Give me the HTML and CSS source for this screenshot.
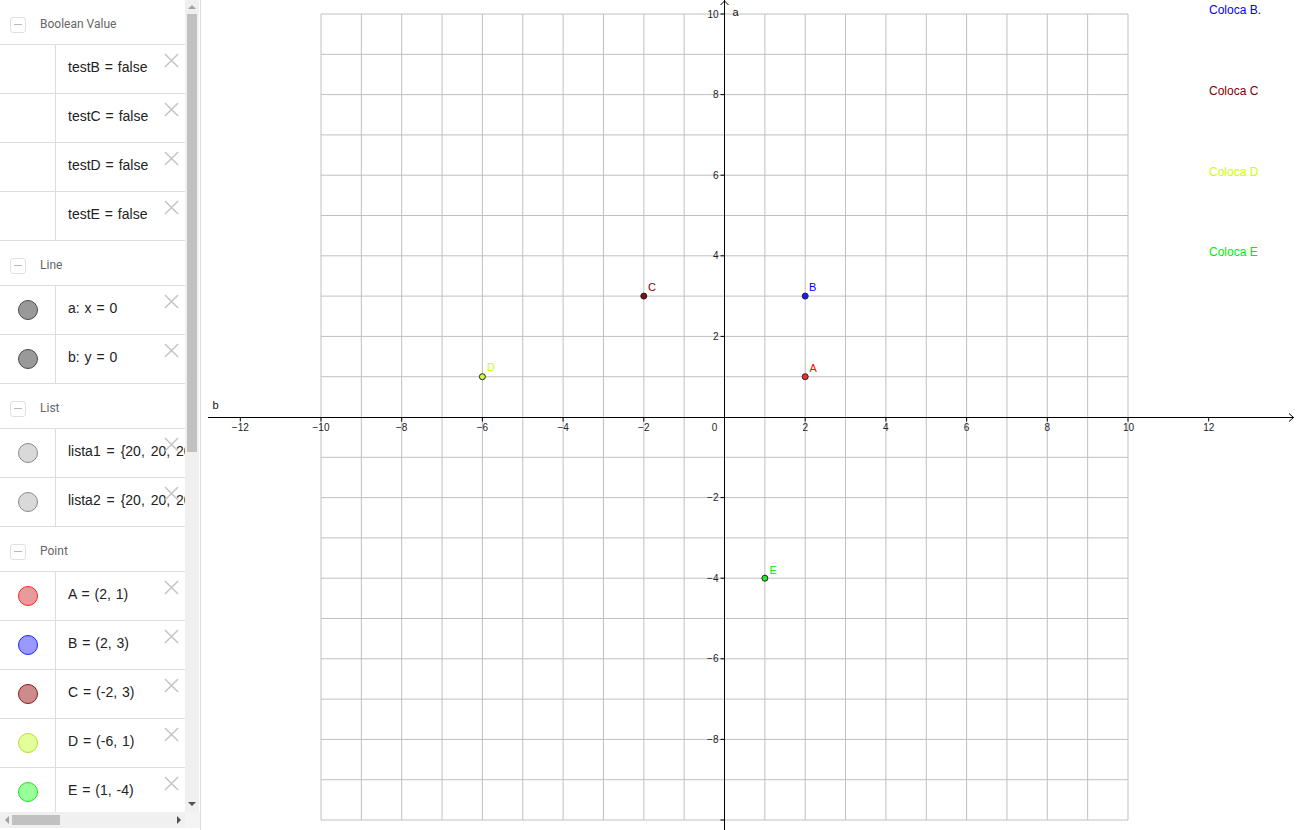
FILE: index.html
```html
<!DOCTYPE html>
<html>
<head>
<meta charset="utf-8">
<title>GeoGebra</title>
<link rel="stylesheet" href="styles.css">
</head>
<body>
<div class="app">
  <aside class="algebra">
    <div class="av-main">
      <div class="av-list">
        <div class="group-head"><span class="toggle"></span><span class="group-title">Boolean Value</span></div>
        <div class="item"><div class="cell"></div><div class="expr">testB = false</div><svg class="close" viewBox="0 0 16 16"><path d="M1 1L15 15M15 1L1 15"/></svg></div>
        <div class="item"><div class="cell"></div><div class="expr">testC = false</div><svg class="close" viewBox="0 0 16 16"><path d="M1 1L15 15M15 1L1 15"/></svg></div>
        <div class="item"><div class="cell"></div><div class="expr">testD = false</div><svg class="close" viewBox="0 0 16 16"><path d="M1 1L15 15M15 1L1 15"/></svg></div>
        <div class="item"><div class="cell"></div><div class="expr">testE = false</div><svg class="close" viewBox="0 0 16 16"><path d="M1 1L15 15M15 1L1 15"/></svg></div>

        <div class="group-head"><span class="toggle"></span><span class="group-title">Line</span></div>
        <div class="item"><div class="cell"><span class="dot dot-line"></span></div><div class="expr">a: x = 0</div><svg class="close" viewBox="0 0 16 16"><path d="M1 1L15 15M15 1L1 15"/></svg></div>
        <div class="item"><div class="cell"><span class="dot dot-line"></span></div><div class="expr">b: y = 0</div><svg class="close" viewBox="0 0 16 16"><path d="M1 1L15 15M15 1L1 15"/></svg></div>

        <div class="group-head"><span class="toggle"></span><span class="group-title">List</span></div>
        <div class="item"><div class="cell"><span class="dot dot-list"></span></div><div class="expr expr-list">lista1 = {20, 20, 20, 20, 20}</div><svg class="close" viewBox="0 0 16 16"><path d="M1 1L15 15M15 1L1 15"/></svg></div>
        <div class="item"><div class="cell"><span class="dot dot-list"></span></div><div class="expr expr-list">lista2 = {20, 20, 20, 20, 20}</div><svg class="close" viewBox="0 0 16 16"><path d="M1 1L15 15M15 1L1 15"/></svg></div>

        <div class="group-head"><span class="toggle"></span><span class="group-title">Point</span></div>
        <div class="item"><div class="cell"><span class="dot dot-a"></span></div><div class="expr">A = (2, 1)</div><svg class="close" viewBox="0 0 16 16"><path d="M1 1L15 15M15 1L1 15"/></svg></div>
        <div class="item"><div class="cell"><span class="dot dot-b"></span></div><div class="expr">B = (2, 3)</div><svg class="close" viewBox="0 0 16 16"><path d="M1 1L15 15M15 1L1 15"/></svg></div>
        <div class="item"><div class="cell"><span class="dot dot-c"></span></div><div class="expr">C = (-2, 3)</div><svg class="close" viewBox="0 0 16 16"><path d="M1 1L15 15M15 1L1 15"/></svg></div>
        <div class="item"><div class="cell"><span class="dot dot-d"></span></div><div class="expr">D = (-6, 1)</div><svg class="close" viewBox="0 0 16 16"><path d="M1 1L15 15M15 1L1 15"/></svg></div>
        <div class="item"><div class="cell"><span class="dot dot-e"></span></div><div class="expr">E = (1, -4)</div><svg class="close" viewBox="0 0 16 16"><path d="M1 1L15 15M15 1L1 15"/></svg></div>
      </div>
      <div class="vscroll">
        <span class="arrow arrow-up"></span>
        <div class="vtrack"><div class="vthumb"></div></div>
        <span class="arrow arrow-down"></span>
      </div>
    </div>
    <div class="av-bottom">
      <div class="hscroll">
        <span class="arrow arrow-left"></span>
        <div class="htrack"><div class="hthumb"></div></div>
        <span class="arrow arrow-right"></span>
      </div>
      <div class="corner"></div>
    </div>
  </aside>

  <main class="graphics">
    <svg class="canvas" width="1095" height="830" viewBox="201 0 1095 830">
      <path class="grid" d="M321 14V820M361.35 14V820M401.7 14V820M442.05 14V820M482.4 14V820M522.75 14V820M563.1 14V820M603.45 14V820M643.8 14V820M684.15 14V820M764.85 14V820M805.2 14V820M845.55 14V820M885.9 14V820M926.25 14V820M966.6 14V820M1006.95 14V820M1047.3 14V820M1087.65 14V820M1128 14V820
      M321 14H1128M321 54.3H1128M321 94.6H1128M321 134.9H1128M321 175.2H1128M321 215.5H1128M321 255.8H1128M321 296.1H1128M321 336.4H1128M321 376.7H1128M321 457.3H1128M321 497.6H1128M321 537.9H1128M321 578.2H1128M321 618.5H1128M321 658.8H1128M321 699.1H1128M321 739.4H1128M321 779.7H1128M321 820H1128"/>
      <path class="axis" d="M208 417.5H1294M724.5 0V830"/>
      <path class="axis" d="M1289 413.5L1293.5 417.5L1289 421.5M720.5 5L724.5 1L728.5 5"/>
      <path class="axis" d="M240.3 417.5V421.5M321 417.5V421.5M401.7 417.5V421.5M482.4 417.5V421.5M563.1 417.5V421.5M643.8 417.5V421.5M805.2 417.5V421.5M885.9 417.5V421.5M966.6 417.5V421.5M1047.3 417.5V421.5M1128 417.5V421.5M1208.7 417.5V421.5
      M720.5 14H724.5M720.5 94.6H724.5M720.5 175.2H724.5M720.5 255.8H724.5M720.5 336.4H724.5M720.5 497.6H724.5M720.5 578.2H724.5M720.5 658.8H724.5M720.5 739.4H724.5M720.5 820H724.5"/>

      <g class="ticklabel xlab">
        <text x="240.3" y="431">−12</text>
        <text x="321" y="431">−10</text>
        <text x="401.7" y="431">−8</text>
        <text x="482.4" y="431">−6</text>
        <text x="563.1" y="431">−4</text>
        <text x="643.8" y="431">−2</text>
        <text x="714.5" y="431">0</text>
        <text x="805.2" y="431">2</text>
        <text x="885.9" y="431">4</text>
        <text x="966.6" y="431">6</text>
        <text x="1047.3" y="431">8</text>
        <text x="1128.5" y="431">10</text>
        <text x="1208.7" y="431">12</text>
      </g>
      <g class="ticklabel ylab">
        <text x="718.5" y="17.8">10</text>
        <text x="718.5" y="98.2">8</text>
        <text x="718.5" y="178.8">6</text>
        <text x="718.5" y="259.4">4</text>
        <text x="718.5" y="340">2</text>
        <text x="718.5" y="501.2">−2</text>
        <text x="718.5" y="581.8">−4</text>
        <text x="718.5" y="662.4">−6</text>
        <text x="718.5" y="743">−8</text>
      </g>

      <text class="axisname" x="212.5" y="409">b</text>
      <text class="axisname" x="732.5" y="15.5">a</text>

      <circle class="pt pt-a" cx="805.2" cy="376.7" r="3"/>
      <circle class="pt pt-b" cx="805.2" cy="296.1" r="3"/>
      <circle class="pt pt-c" cx="643.8" cy="296.1" r="3"/>
      <circle class="pt pt-d" cx="482.4" cy="376.7" r="3"/>
      <circle class="pt pt-e" cx="764.85" cy="578.2" r="3"/>

      <text class="ptlabel lab-a" x="809.5" y="371.5">A</text>
      <text class="ptlabel lab-b" x="809" y="291">B</text>
      <text class="ptlabel lab-c" x="648" y="291">C</text>
      <text class="ptlabel lab-d" x="487" y="371">D</text>
      <text class="ptlabel lab-e" x="769.5" y="573.5">E</text>

      <text class="note lab-b" x="1209" y="14">Coloca B.</text>
      <text class="note lab-c" x="1209" y="95">Coloca C</text>
      <text class="note lab-d" x="1209" y="176">Coloca D</text>
      <text class="note lab-e" x="1209" y="256">Coloca E</text>
    </svg>
  </main>
</div>
</body>
</html>
```
FILE: styles.css
```css
html, body {
  margin: 0;
  padding: 0;
  background: #ffffff;
}
body {
  width: 1296px;
  height: 830px;
  overflow: hidden;
  font-family: "Liberation Sans", Arial, sans-serif;
}
.app {
  display: flex;
  width: 1296px;
  height: 830px;
}

/* ---------- Algebra view ---------- */
.algebra {
  width: 200px;
  height: 830px;
  border-right: 1px solid #dcdcdc;
  display: flex;
  flex-direction: column;
  background: #fff;
}
.av-main {
  display: flex;
  height: 812px;
}
.av-list {
  width: 185px;
  height: 812px;
  overflow: hidden;
}
.group-head {
  box-sizing: border-box;
  height: 45px;
  padding-top: 4px;
  border-bottom: 1px solid #dedede;
  display: flex;
  align-items: center;
  gap: 14px;
  padding-left: 10px;
}
.toggle {
  width: 14px;
  height: 14px;
  border: 1px solid #e0e0e0;
  border-radius: 3px;
  display: flex;
  align-items: center;
  justify-content: center;
  margin-top: 1px;
}
.toggle::before {
  content: "";
  width: 8px;
  height: 1px;
  background: #b8b8b8;
}
.group-title {
  font-family: Roboto, "Open Sans", sans-serif;
  font-size: 12px;
  color: #666;
}
.item {
  position: relative;
  height: 48px;
  border-bottom: 1px solid #dedede;
  display: flex;
  align-items: center;
}
.cell {
  width: 56px;
  height: 48px;
  border-right: 1px solid #dedede;
  box-sizing: border-box;
  flex: none;
  display: flex;
  align-items: center;
  justify-content: center;
  padding-bottom: 1px;
}
.expr {
  padding-left: 12px;
  padding-bottom: 4px;
  font-size: 14px;
  color: #222;
  white-space: nowrap;
  word-spacing: 1px;
}
.expr-list {
  word-spacing: 2px;
}
.close {
  position: absolute;
  right: 6px;
  top: 8px;
  width: 15px;
  height: 15px;
  fill: none;
  stroke: #c4c4c4;
  stroke-width: 1.6;
}
.dot {
  width: 18px;
  height: 18px;
  border-radius: 50%;
  border: 1px solid #444;
  box-sizing: content-box;
}
.dot-line { background: #999999; border-color: #4a4a4a; }
.dot-list { background: #d9d9d9; border-color: #8a8a8a; }
.dot-a { background: #e99a9a; border-color: #ff2020; }
.dot-b { background: #9999ff; border-color: #2020ff; }
.dot-c { background: #cc8c8c; border-color: #8a1a1a; }
.dot-d { background: #e2ff99; border-color: #b8dd33; }
.dot-e { background: #99ff99; border-color: #22dd22; }

/* scrollbars */
.vscroll {
  width: 14px;
  height: 812px;
  background: #f0f0f0;
  display: flex;
  flex-direction: column;
  align-items: center;
}
.vtrack {
  flex: 1;
  width: 10px;
}
.vthumb {
  width: 10px;
  height: 438px;
  margin-top: 1px;
  background: #c1c1c1;
}
.arrow {
  width: 0;
  height: 0;
  flex: none;
}
.arrow-up {
  margin: 5px 0 4px;
  border-left: 4px solid transparent;
  border-right: 4px solid transparent;
  border-bottom: 4px solid #a3a3a3;
}
.arrow-down {
  margin: 4px 0 6px;
  border-left: 4px solid transparent;
  border-right: 4px solid transparent;
  border-top: 4px solid #505050;
}
.av-bottom {
  display: flex;
  height: 16px;
}
.hscroll {
  width: 185px;
  height: 16px;
  background: #f0f0f0;
  display: flex;
  align-items: center;
}
.htrack {
  flex: 1;
  height: 10px;
}
.hthumb {
  width: 48px;
  height: 10px;
  background: #c1c1c1;
}
.arrow-left {
  margin: 0 3px 0 5px;
  border-top: 4px solid transparent;
  border-bottom: 4px solid transparent;
  border-right: 4px solid #a3a3a3;
}
.arrow-right {
  margin: 0 4px 0 3px;
  border-top: 4px solid transparent;
  border-bottom: 4px solid transparent;
  border-left: 4px solid #505050;
}
.corner {
  width: 15px;
  height: 16px;
  background: #f4f4f4;
}

/* ---------- Graphics view ---------- */
.graphics {
  width: 1095px;
  height: 830px;
}
.canvas {
  display: block;
}
.grid {
  fill: none;
  stroke: #c0c0c0;
  stroke-width: 1;
}
.axis {
  fill: none;
  stroke: #000;
  stroke-width: 1;
}
.ticklabel {
  font-family: "Liberation Sans", Arial, sans-serif;
  font-size: 10px;
  fill: #222;
}
.xlab { text-anchor: middle; }
.ylab { text-anchor: end; }
.axisname {
  font-family: "Liberation Sans", Arial, sans-serif;
  font-size: 11px;
  fill: #111;
}
.pt { stroke: #222; stroke-width: 1; }
.pt-a { fill: #ff2a2a; }
.pt-b { fill: #1a1aff; }
.pt-c { fill: #7a1010; }
.pt-d { fill: #ccff33; }
.pt-e { fill: #22ee22; }
.ptlabel {
  font-family: "Liberation Sans", Arial, sans-serif;
  font-size: 11px;
}
.note {
  font-family: "Liberation Sans", Arial, sans-serif;
  font-size: 12px;
}
.lab-a { fill: #ff0000; }
.lab-b { fill: #0000ff; }
.lab-c { fill: #800000; }
.lab-d { fill: #ccff00; }
.lab-e { fill: #00ee00; }
```
